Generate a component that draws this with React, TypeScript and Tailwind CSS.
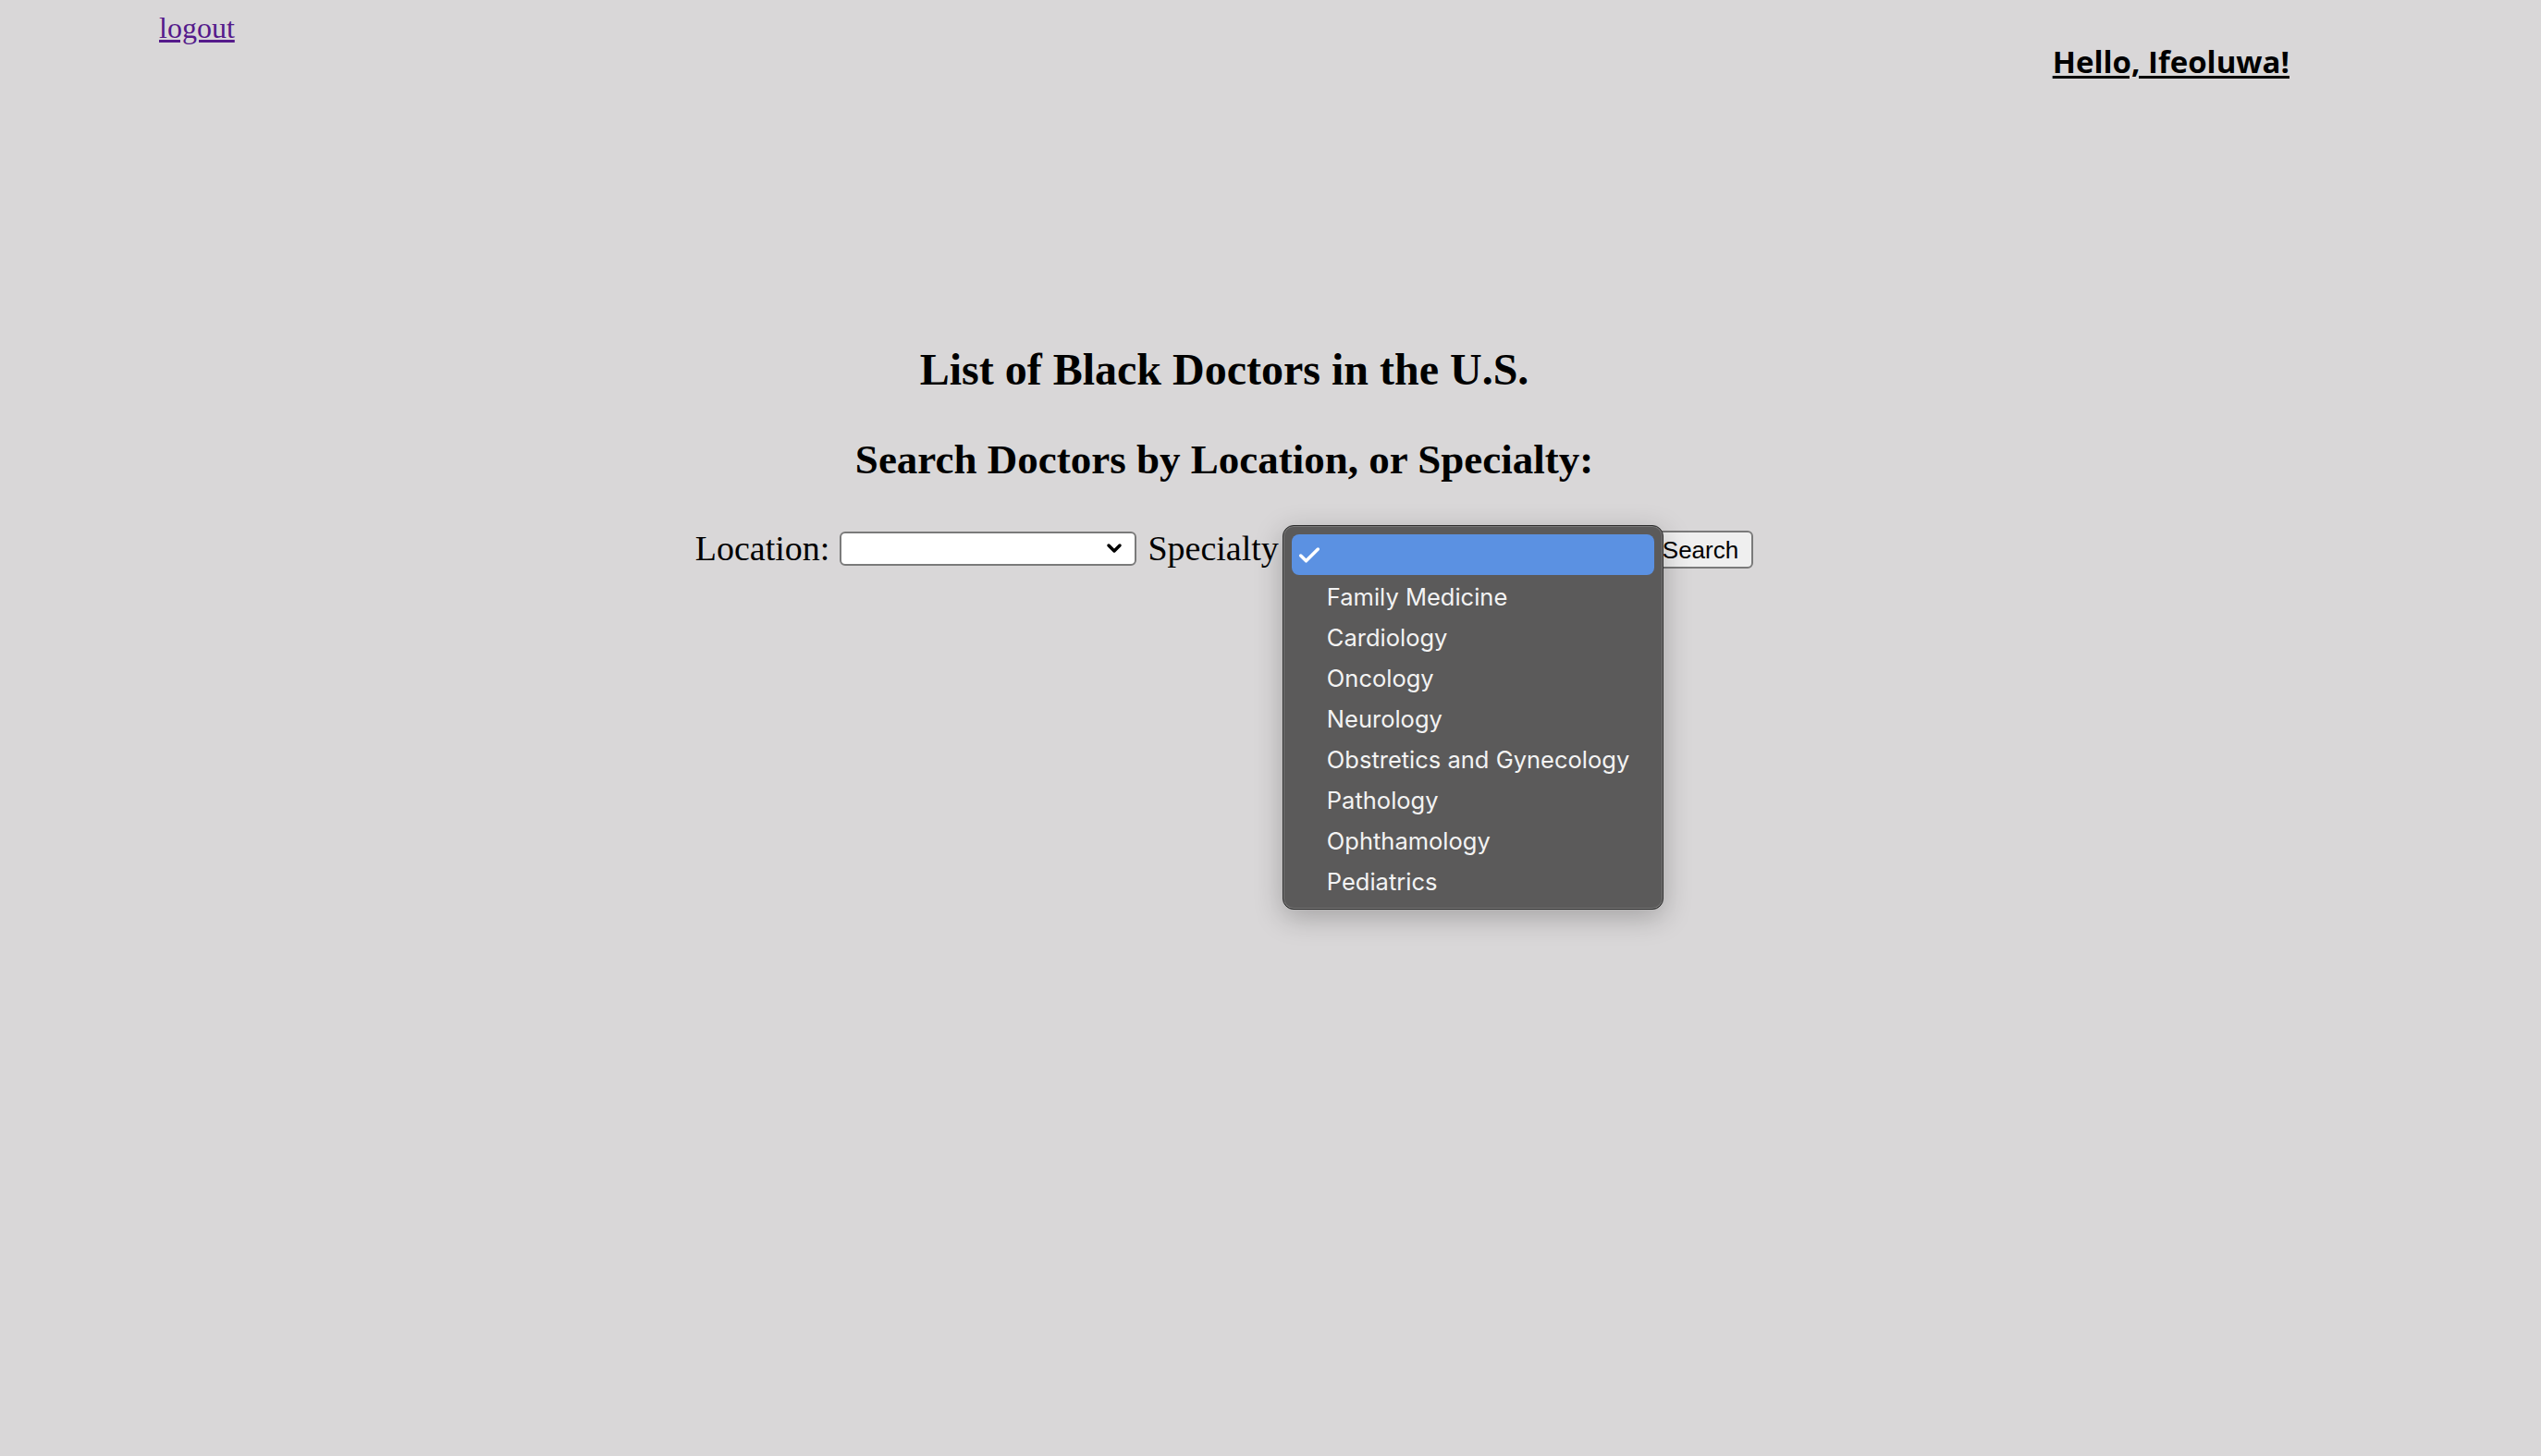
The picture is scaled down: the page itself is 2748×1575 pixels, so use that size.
import { Check, ChevronDown } from "lucide-react";

const specialties = [
  "Family Medicine",
  "Cardiology",
  "Oncology",
  "Neurology",
  "Obstretics and Gynecology",
  "Pathology",
  "Ophthamology",
  "Pediatrics",
];

function SpecialtyMenu() {
  return (
    <div className="absolute left-[-5px] top-[-9px] z-10 w-[412px] rounded-[12px] border border-[#2b2b2b] bg-[#5b5a5a] p-[9px] shadow-[0_8px_30px_rgba(0,0,0,0.25),inset_0_0_0_1px_rgba(255,255,255,0.18)] font-['Inter',sans-serif] text-[25.5px] text-[#f3f3f3]">
      <div className="flex h-[44px] items-center rounded-[8px] bg-[#5b91e2] pl-[5px] pt-[3px]">
        <Check size={28} strokeWidth={3} className="text-white" />
      </div>
      {specialties.map((s) => (
        <div key={s} className="flex h-[44px] items-center pl-[38px] pt-[4px] leading-none">
          {s}
        </div>
      ))}
    </div>
  );
}

export default function App() {
  return (
    <div className="min-h-[1575px] w-full bg-[#d9d7d8] font-['Liberation_Serif',serif] text-black">
      <div className="flex justify-between pl-[172px] pr-[272px]">
        <a href="#" className="mt-[10px] text-[32px] leading-[40px] text-[#551a8b] underline">
          logout
        </a>
        <a href="#" className="mt-[45px] font-['Open_Sans',sans-serif] text-[33px] font-bold leading-[44px] underline underline-offset-[3px] decoration-[3px]">
          Hello, Ifeoluwa!
        </a>
      </div>

      <div className="flex w-[2648px] flex-col items-center">
        <h2 className="mt-[283px] text-[48px] font-bold leading-[56px]">List of Black Doctors in the U.S.</h2>
        <h2 className="mt-[41px] text-[45px] font-bold leading-[56px]">Search Doctors by Location, or Specialty:</h2>

        <div className="mt-[46px] flex h-[44px] items-center text-[38px]">
          <span>Location:</span>
          <div className="ml-[11px] flex h-[37px] w-[321px] items-center justify-end rounded-[6px] border-2 border-[#7a7a7a] bg-white pr-[10px]">
            <ChevronDown size={24} strokeWidth={3.5} />
          </div>
          <span className="ml-[12px]">Specialty</span>
          <div className="relative ml-[7px] h-[37px] w-[396px] rounded-[6px] border-2 border-[#7a7a7a] bg-white">
            <SpecialtyMenu />
          </div>
          <button className="ml-[-4px] mt-[3px] h-[41px] rounded-[6px] border-2 border-[#7a7a7a] bg-[#efefef] px-[14px] font-['Liberation_Sans',sans-serif] text-[26px] leading-none">
            Search
          </button>
        </div>
      </div>
    </div>
  );
}
